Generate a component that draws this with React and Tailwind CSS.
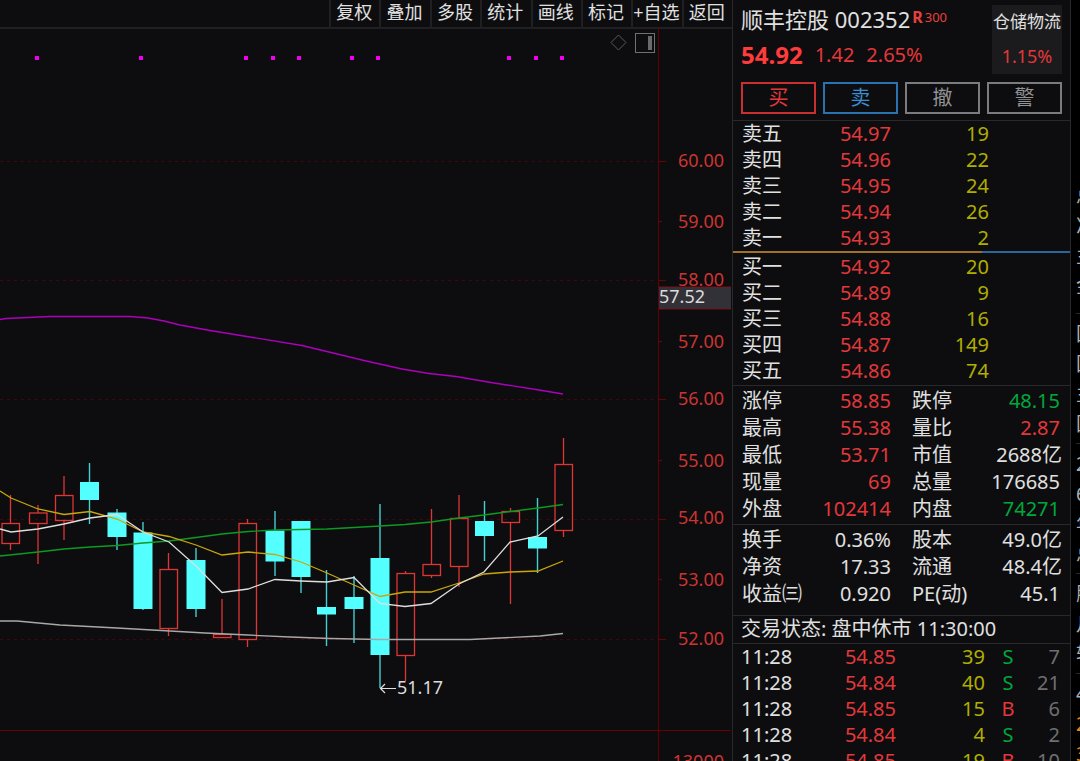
import React from "react";

const TOOLS = ["复权", "叠加", "多股", "统计", "画线", "标记", "+自选", "返回"];

const ASKS = [
  ["卖五", "54.97", 19],
  ["卖四", "54.96", 22],
  ["卖三", "54.95", 24],
  ["卖二", "54.94", 26],
  ["卖一", "54.93", 2],
];

const BIDS = [
  ["买一", "54.92", 20],
  ["买二", "54.89", 9],
  ["买三", "54.88", 16],
  ["买四", "54.87", 149],
  ["买五", "54.86", 74],
];

const RED = "text-[#e2383a]";
const GREEN = "text-[#00a83c]";
const WHITE = "text-[#e0e0e0]";

const RANGE_STATS = [
  ["涨停", "58.85", RED, "跌停", "48.15", GREEN],
  ["最高", "55.38", RED, "量比", "2.87", RED],
  ["最低", "53.71", RED, "市值", "2688亿", WHITE],
  ["现量", "69", RED, "总量", "176685", WHITE],
  ["外盘", "102414", RED, "内盘", "74271", GREEN],
];

const VALUE_STATS = [
  ["换手", "0.36%", WHITE, "股本", "49.0亿", WHITE],
  ["净资", "17.33", WHITE, "流通", "48.4亿", WHITE],
  ["收益㈢", "0.920", WHITE, "PE(动)", "45.1", WHITE],
];

const TRADES = [
  ["11:28", "54.85", 39, "S", 7],
  ["11:28", "54.84", 40, "S", 21],
  ["11:28", "54.85", 15, "B", 6],
  ["11:28", "54.84", 4, "S", 2],
  ["11:28", "54.85", 19, "B", 10],
];

// centre x, body top, body bottom, wick top, wick bottom, rising
const CANDLES = [
  [10.5, 523.5, 543.5, 495, 550, true],
  [38, 513, 523.5, 505, 564, true],
  [64, 495.5, 520.5, 476, 540, true],
  [89.5, 482, 500, 463, 524, false],
  [117, 512.5, 537, 509, 550, false],
  [143, 532.5, 609, 522, 610, false],
  [168.5, 569.5, 628.5, 553, 636, true],
  [196, 560, 609, 548, 617, false],
  [222, 634.5, 637.5, 599, 637, true],
  [247.5, 523.5, 639.5, 519, 647, true],
  [275, 530.5, 561.5, 511, 576, false],
  [301, 521, 577, 521, 593, false],
  [326.5, 607, 614.5, 570, 646, false],
  [354, 597, 609, 576, 643, false],
  [380, 558, 655, 504, 688, false],
  [405.5, 573.5, 655.5, 571, 681, true],
  [431.5, 564.5, 575.5, 509, 578, true],
  [459, 518.5, 566.5, 495, 587, true],
  [484.5, 521, 536, 501, 561, false],
  [510.5, 511.5, 522.5, 508, 604, true],
  [537.5, 537, 548.5, 498, 573, false],
  [563.5, 464.5, 530.5, 438, 537, true],
];

const AVERAGES = [
  ["#a8a8a8", "0,621 17,621 60,625 117,628 170,631 205,633 248,635 290,637 330,638.5 380,639.5 470,639.5 500,638 540,636 563,633.5"],
  ["#ac00bc", "0,319.5 6,318.5 50,316.5 130,316.5 148,318 164,321 180,325 210,330.5 253,337.5 302,345.5 329,352 364,360.5 402,369 429,373.5 456,376.5 494,383 536,389.5 563,394"],
  ["#0d9a22", "0,556 38,552 64,549 90,547 117,545.5 143,543 169,541 196,537.5 222,534 248,531.5 275,530 301,529.5 327,529 354,527.5 380,526 405,524.5 431,522 459,518 484,515 510,511.5 538,508 563,504.5"],
  ["#c9a70a", "0,491 11,498 38,509 64,514.5 90,511.5 117,519 143,532 169,536.5 196,545 222,555 248,552 275,554.5 301,562 327,573 354,585 380,596.5 405,592 431,592 459,583 484,574 510,572 538,571 563,561"],
  ["#dedede", "0,529 11,532 38,529 64,524 90,518 117,514.5 143,532 169,542 196,566 222,592.5 248,589 275,579.5 301,581 327,582 354,577.5 380,603.5 405,606.5 431,603.5 459,584 484,572 510,542 538,536 563,517"],
];

const SIGNALS = [37, 141, 246, 273, 299, 352, 378, 509, 536, 562];

const AXIS = [
  ["60.00", 161.5, 167],
  ["59.00", 221.5, 228],
  ["58.00", 280.5, 286],
  ["57.00", 341.5, 348],
  ["56.00", 399.5, 405],
  ["55.00", 460.5, 467],
  ["54.00", 519.5, 524],
  ["53.00", 579.5, 586],
  ["52.00", 639.5, 645],
];

// Leading glyphs of the neighbouring column, grouped by its dividers
const NEXT_COLUMN = [
  ["总", "净", "主", "金"],
  ["国", "国", "主", "国"],
  ["2", "6", "年", "总"],
  ["股", "月", "转"],
];

function Chart() {
  return (
    <svg
      className="block min-h-0 w-full flex-1"
      viewBox="0 29 732 732"
      preserveAspectRatio="xMinYMin slice"
      role="img"
      aria-label="顺丰控股 K线图"
    >
      {AXIS.map(([label, y, base], i) => (
        <g key={label}>
          {i % 2 === 0 && (
            <line x1="0" x2="658" y1={y} y2={y} stroke="#480509" strokeDasharray="3 4" />
          )}
          <line x1="659" x2={i % 2 === 0 ? 666 : 662} y1={y} y2={y} stroke="#6a0306" />
          <text x="724" y={base} textAnchor="end" fontSize="18" fill="#cc3432">{label}</text>
        </g>
      ))}
      <line x1="658.5" x2="658.5" y1="29" y2="761" stroke="#640003" />
      <line x1="0" x2="731" y1="730.5" y2="730.5" stroke="#6a0003" />
      <text x="724" y="768" textAnchor="end" fontSize="18" fill="#cc3432">13000</text>

      <rect x="659" y="286" width="72" height="24" fill="#640003" />
      <rect x="659" y="287" width="72" height="22" fill="#333138" />
      <text x="659" y="303" fontSize="18" fill="#dcdcdc">57.52</text>

      {SIGNALS.map((x) => (
        <rect key={x} x={x - 2} y="56" width="4" height="4" fill="#f000f0" />
      ))}

      <path d="M618.5 35 L626 42.5 L618.5 50 L611 42.5 Z" fill="none" stroke="#5a5a5c" />
      <rect x="635.5" y="33.5" width="19" height="19" fill="none" stroke="#707072" />
      <rect x="648" y="36" width="4" height="14" fill="#6a6a6c" />

      {CANDLES.map(([x, top, bottom, high, low, up]) =>
        up ? (
          <g key={x} stroke="#df3535" strokeWidth="1.3" fill="none">
            <line x1={x} x2={x} y1={high} y2={top} />
            <line x1={x} x2={x} y1={bottom} y2={low} />
            <rect x={x - 8.5} y={top} width="17.5" height={bottom - top} />
          </g>
        ) : (
          <g key={x}>
            <line x1={x} x2={x} y1={high} y2={low} stroke="#45cfcf" strokeWidth="1.4" />
            <rect x={x - 9.5} y={top} width="19" height={bottom - top} fill="#54ffff" />
          </g>
        )
      )}

      {AVERAGES.map(([color, points]) => (
        <polyline key={color} points={points} fill="none" stroke={color} strokeWidth="1.3" />
      ))}

      <path d="M396 688.5 H380 M385 684 L380.5 688.5 L385 693" fill="none" stroke="#dedede" strokeWidth="1.2" />
      <text x="397" y="694" fontSize="18" fill="#dcdcdc">51.17</text>
    </svg>
  );
}

function Quotes({ rows, label }) {
  return (
    <table className="w-full table-fixed border-collapse" aria-label={label}>
      <colgroup>
        <col className="w-[78px]" />
        <col className="w-[80px]" />
        <col className="w-[98px]" />
        <col />
      </colgroup>
      <tbody>
        {rows.map(([name, price, volume]) => (
          <tr key={name} className="h-[26px] leading-[26px]">
            <th scope="row" className="p-0 pl-[9px] text-left font-normal">{name}</th>
            <td className="p-0 text-right text-[#e2383a]">{price}</td>
            <td className="p-0 text-right text-[#b0ae00]">{volume}</td>
            <td className="p-0" />
          </tr>
        ))}
      </tbody>
    </table>
  );
}

function Stats({ rows, label }) {
  return (
    <table className="w-full table-fixed border-collapse" aria-label={label}>
      <colgroup>
        <col className="w-[78px]" />
        <col className="w-[80px]" />
        <col className="w-[88px]" />
        <col />
      </colgroup>
      <tbody>
        {rows.map(([a, av, ac, b, bv, bc]) => (
          <tr key={a} className="h-[27px] leading-[27px] whitespace-nowrap">
            <th scope="row" className="p-0 pl-[9px] text-left font-normal">{a}</th>
            <td className={`p-0 text-right ${ac}`}>{av}</td>
            <th scope="row" className="p-0 pl-[21px] text-left font-normal">{b}</th>
            <td className={`p-0 text-right ${bc} ${bv.endsWith("亿") ? "pr-2" : "pr-[10px]"}`}>{bv}</td>
          </tr>
        ))}
      </tbody>
    </table>
  );
}

export default function App() {
  return (
    <div className="flex h-screen w-full overflow-hidden bg-[#0d0d0f] font-['Noto_Sans','Noto_Sans_CJK_SC',sans-serif] text-[20px] text-[#e0e0e0]">
      <main className="flex min-w-0 flex-1 flex-col">
        <nav className="flex h-[29px] shrink-0 justify-end border-b-2 border-[#202022]">
          <div className="grid w-[403px] grid-cols-8">
            {TOOLS.map((tool) => (
              <button
                key={tool}
                type="button"
                className="border-l-2 border-[#202022] pr-[2px] pb-[2px] text-center text-[18px] leading-[25px] whitespace-nowrap"
              >
                {tool}
              </button>
            ))}
          </div>
        </nav>
        <Chart />
      </main>

      <aside className="flex w-[339px] shrink-0 flex-col overflow-hidden border-x border-[#29292b]">
        <header className="flex h-[121px] shrink-0 flex-col border-b border-[#29292b] pr-2 pl-2">
          <div className="flex h-[74px] items-start justify-between pt-[5px]">
            <div className="whitespace-nowrap">
              <h1 className="flex text-[22px] leading-7">
                顺丰控股 002352
                <span className="ml-[2px] flex items-start gap-[2px] leading-6 text-[#e8403f]">
                  <b className="text-[16px]">R</b>
                  <span className="text-[13px]">300</span>
                </span>
              </h1>
              <p className="flex items-center gap-3 pt-1 leading-9 text-[#e2383a]">
                <strong className="text-[24px] font-bold text-[#ff3b3b]">54.92</strong>
                <span>1.42</span>
                <span>2.65%</span>
              </p>
            </div>
            <a href="#sector" className="flex h-[69px] w-[70px] shrink-0 flex-col items-center bg-[#1b1b1d] text-center whitespace-nowrap">
              <span className="text-[17px] leading-[34px]">仓储物流</span>
              <span className="text-[18px] leading-[34px] text-[#e2383a]">1.15%</span>
            </a>
          </div>
          <div className="grid grid-cols-4 gap-[7px] pt-2 leading-7">
            <button type="button" className="h-8 border-2 border-[#c83032] text-[#e2383a]">买</button>
            <button type="button" className="h-8 border-2 border-[#2b72b0] text-[#3a8ed2]">卖</button>
            <button type="button" className="h-8 border-2 border-[#7c7c7e] text-[#939395]">撤</button>
            <button type="button" className="h-8 border-2 border-[#7c7c7e] text-[#939395]">警</button>
          </div>
        </header>

        <section className="shrink-0 border-b border-[#29292b] pb-px">
          <Quotes rows={ASKS} label="卖盘" />
          <div className="mb-px flex h-[2px]">
            <div className="w-[74%] bg-[#a07028]" />
            <div className="flex-1 bg-[#2a679f]" />
          </div>
          <Quotes rows={BIDS} label="买盘" />
        </section>

        <section className="shrink-0 border-b border-[#29292b] pt-px pb-[2px]">
          <Stats rows={RANGE_STATS} label="行情" />
        </section>

        <section className="shrink-0 border-b border-[#29292b] pt-px pb-2">
          <Stats rows={VALUE_STATS} label="财务" />
        </section>

        <p className="shrink-0 border-b border-[#29292b] pb-px pl-2 leading-[26px] whitespace-nowrap">
          交易状态: 盘中休市 11:30:00
        </p>

        <table className="w-full table-fixed border-collapse" aria-label="成交明细">
          <colgroup>
            <col className="w-[78px]" />
            <col className="w-[85px]" />
            <col className="w-[89px]" />
            <col className="w-[46px]" />
            <col />
          </colgroup>
          <tbody>
            {TRADES.map(([time, price, volume, side, count], i) => (
              <tr key={i} className="h-[26px] leading-[26px]">
                <td className="p-0 pl-2">{time}</td>
                <td className="p-0 text-right text-[#e2383a]">{price}</td>
                <td className="p-0 text-right text-[#b0ae00]">{volume}</td>
                <td className={`p-0 text-center ${side === "S" ? GREEN : RED}`}>{side}</td>
                <td className="p-0 pr-[10px] text-right text-[#6f6f71]">{count}</td>
              </tr>
            ))}
          </tbody>
        </table>
      </aside>

      <div className="w-[9px] shrink-0 overflow-hidden bg-black pt-[181px] pl-[5px] text-[19px] leading-[30px] text-[#a9b0b8]">
        {NEXT_COLUMN.map((group, i) => (
          <div key={i} className="mb-[5px] border-b border-[#29292b] pb-1 first:pb-3">
            {group.map((glyph, j) => (
              <div key={j} className="whitespace-nowrap">{glyph}</div>
            ))}
          </div>
        ))}
        <div>4</div>
        <div className="text-[#e88a10]">2</div>
        <div className="text-[#e88a10]">3</div>
      </div>
    </div>
  );
}
